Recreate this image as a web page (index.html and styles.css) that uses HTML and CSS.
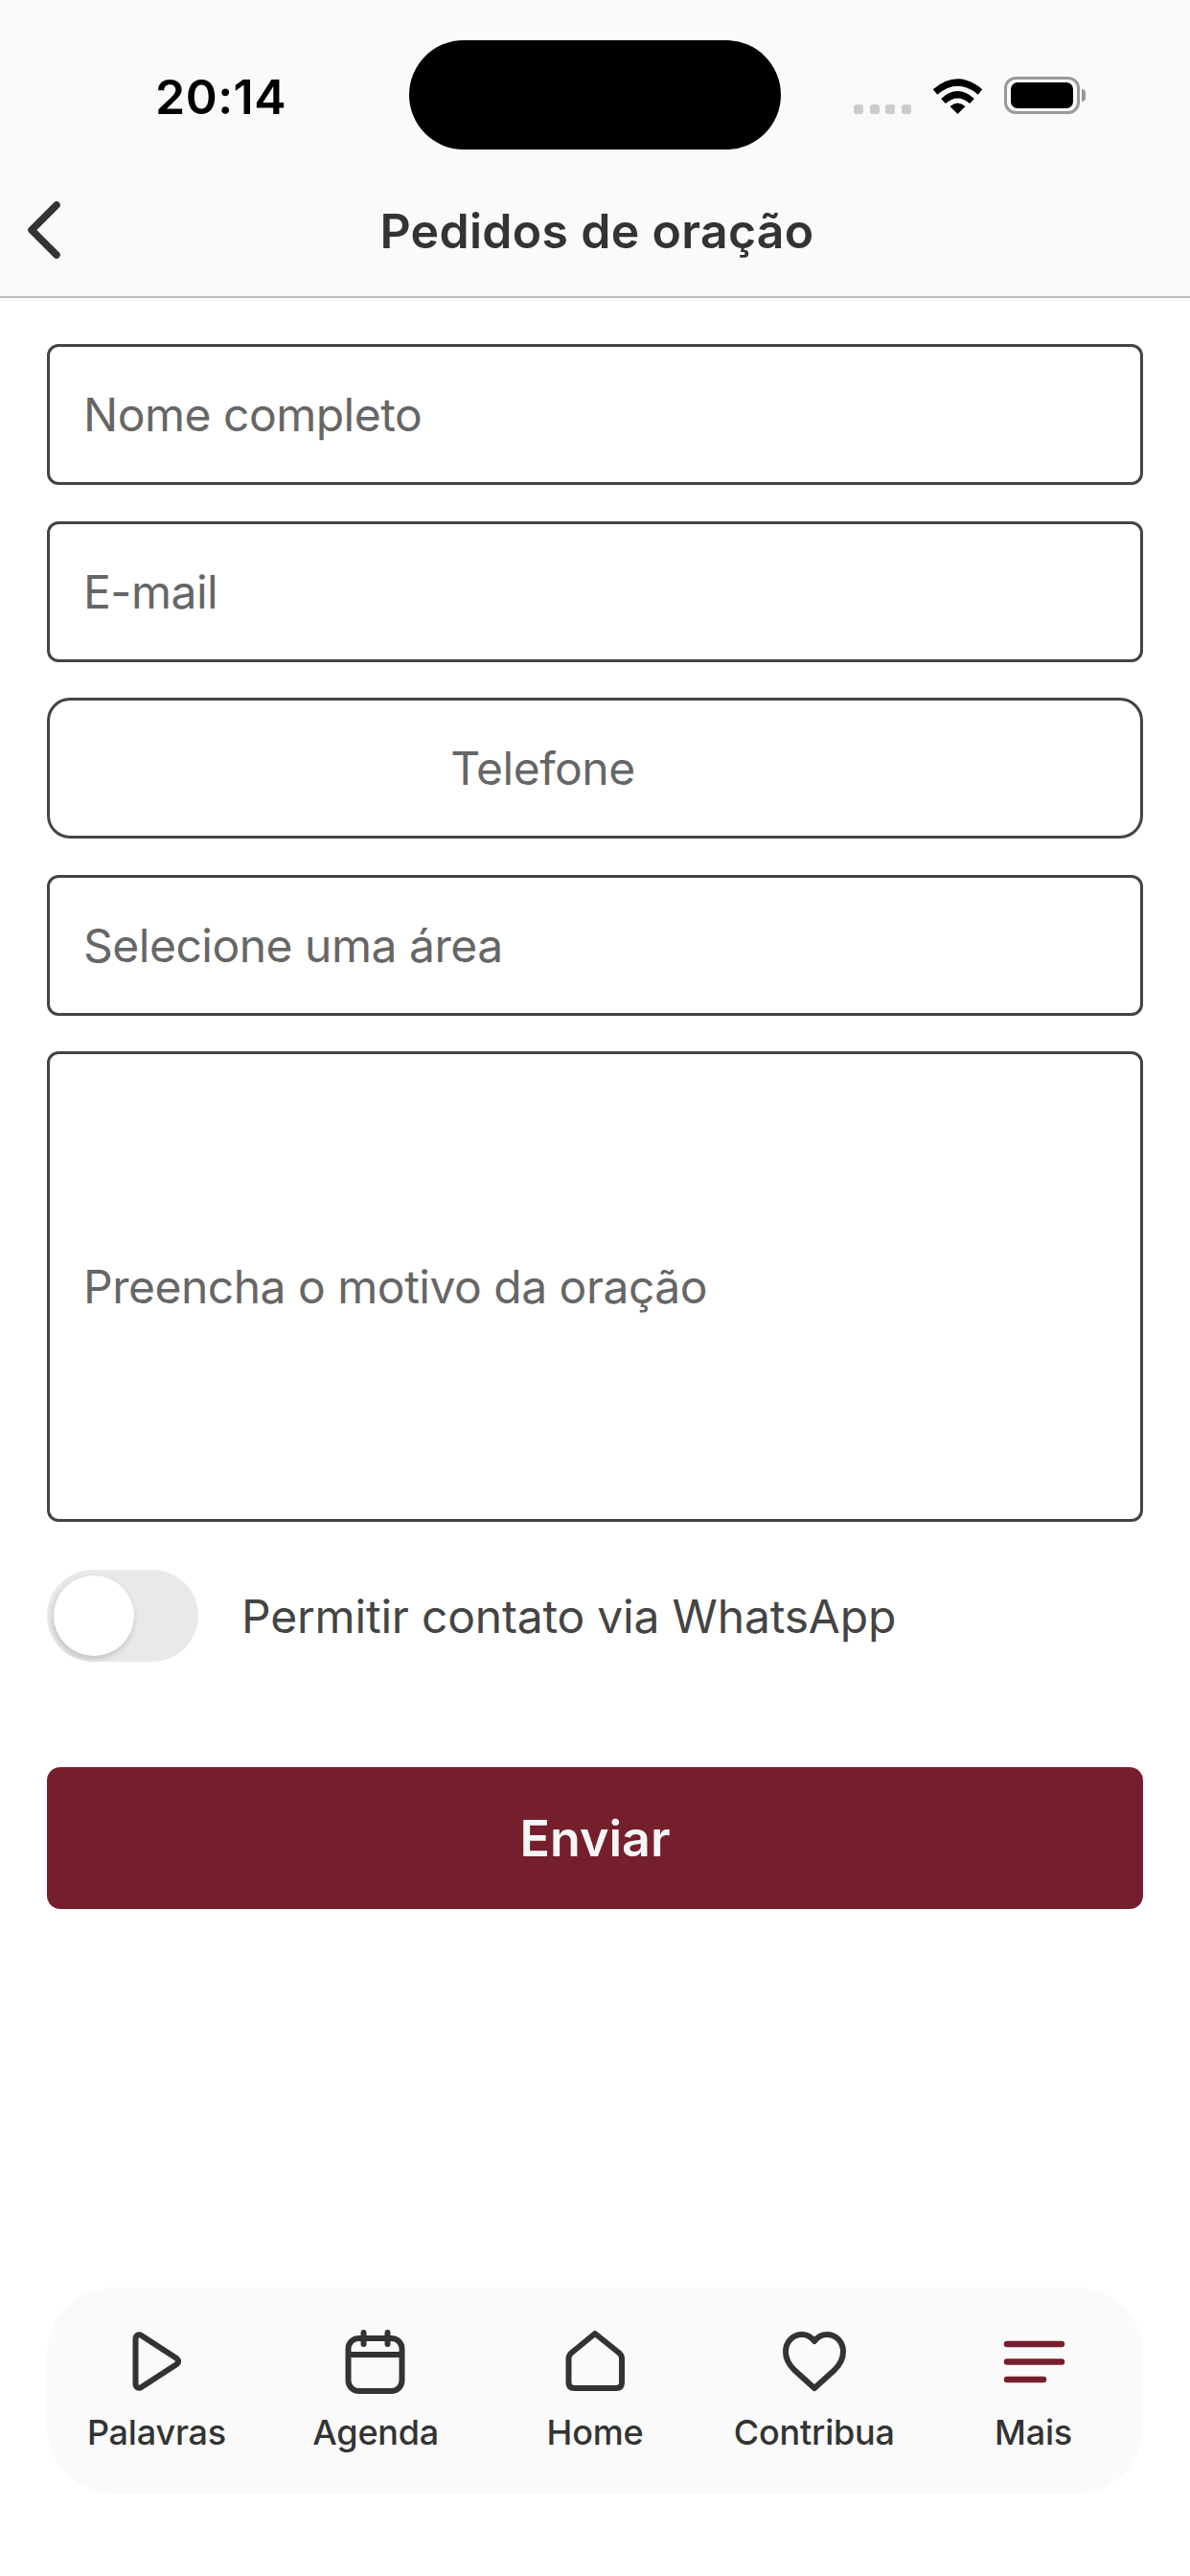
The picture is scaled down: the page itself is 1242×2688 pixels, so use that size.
FILE: index.html
```html
<!DOCTYPE html>
<html lang="pt-BR">
<head>
    <meta charset="UTF-8">
    <meta name="viewport" content="width=device-width, initial-scale=1.0">
    <title>Pedidos de oração</title>
    <link rel="stylesheet" href="styles.css">
</head>
<body>
    <div class="page">
        <header class="top">
            <div class="status-bar">
                <div class="status-time">20:14</div>
                <div class="island"></div>
                <div class="status-icons">
                    <div class="signal"><span></span><span></span><span></span><span></span></div>
                    <svg class="wifi" width="53" height="38" viewBox="0 0 53 38">
                        <path d="M3 15 Q26.5 -5 50 15" fill="none" stroke="#000" stroke-width="7"/>
                        <path d="M11.5 24.5 Q26.5 11 41.5 24.5" fill="none" stroke="#000" stroke-width="7"/>
                        <path d="M18.5 30 Q26.5 23 34.5 30 L26.5 38 Z" fill="#000"/>
                    </svg>
                    <div class="battery"><div class="battery-level"></div></div>
                    <div class="battery-cap"></div>
                </div>
            </div>
            <nav class="nav-bar">
                <svg class="back" width="36" height="60" viewBox="0 0 36 60">
                    <path d="M31 4 L5 30 L31 56" fill="none" stroke="#333" stroke-width="7.5" stroke-linecap="round" stroke-linejoin="round"/>
                </svg>
                <h1 class="nav-title">Pedidos de oração</h1>
            </nav>
        </header>

        <main class="form">
            <div class="field">Nome completo</div>
            <div class="field">E-mail</div>
            <div class="field field-phone">Telefone</div>
            <div class="field">Selecione uma área</div>
            <div class="field field-message">Preencha o motivo da oração</div>

            <div class="whatsapp">
                <div class="toggle"><div class="toggle-knob"></div></div>
                <span class="whatsapp-label">Permitir contato via WhatsApp</span>
            </div>

            <button class="send">Enviar</button>
        </main>

        <footer class="tabbar">
            <div class="tab">
                <svg class="tab-icon" viewBox="0 0 70 70">
                    <path d="M13.5 11 C13.5 7 16.5 5 19.5 7 L56.5 31 Q59.5 34 56.5 37 L19.5 61 C16.5 63 13.5 61 13.5 57 Z"/>
                </svg>
                <span class="tab-label">Palavras</span>
            </div>
            <div class="tab">
                <svg class="tab-icon" viewBox="0 0 70 70">
                    <rect x="6.5" y="10" width="56" height="55" rx="11"/>
                    <path d="M6.5 27 H62.5"/>
                    <path d="M22.5 4 V16 M47.5 4 V16" stroke-linecap="round"/>
                </svg>
                <span class="tab-label">Agenda</span>
            </div>
            <div class="tab">
                <svg class="tab-icon" viewBox="0 0 70 70">
                    <path d="M35 5 L60.5 25.5 Q63 28 63 31 V56 Q63 62 57 62 H13.5 Q7.5 62 7.5 56 V31 Q7.5 28 10 25.5 Z"/>
                </svg>
                <span class="tab-label">Home</span>
            </div>
            <div class="tab">
                <svg class="tab-icon" viewBox="0 0 70 70">
                    <path d="M35 62 L14 43 C8 37 5 31 5 24 C5 13 13 6 22 6 C27 6 32 9 35 13 C38 9 43 6 48 6 C57 6 65 13 65 24 C65 31 62 37 56 43 Z"/>
                </svg>
                <span class="tab-label">Contribua</span>
            </div>
            <div class="tab">
                <svg class="tab-icon tab-icon-active" viewBox="0 0 70 70">
                    <path d="M7 16 H64 M7 34.5 H64 M7 53 H45" stroke-linecap="round"/>
                </svg>
                <span class="tab-label">Mais</span>
            </div>
        </footer>
    </div>
</body>
</html>
```

FILE: styles.css
```css
:root {
    --wine: #751f2d;
    --text-dark: #333;
    --text-mid: #444;
    --text-light: #666;
    --soft-gray: #fafafa;
}

body {
    font-family: Inter, "Open Sans", Arial, sans-serif;
    background-color: #fff;
    color: var(--text-dark);
    margin: 0;
    padding: 0;
}

.page {
    display: flex;
    flex-direction: column;
    min-height: 2688px;
}

.top {
    background-color: var(--soft-gray);
    border-bottom: 2px solid #bbb;
}

.status-bar {
    display: flex;
    align-items: flex-start;
    height: 114px;
    padding-top: 42px;
}

.status-time {
    width: 265px;
    padding: 29px 0 0 162px;
    font-size: 50px;
    font-weight: 600;
    line-height: 60px;
    letter-spacing: 0.5px;
    color: #000;
}

.island {
    width: 388px;
    height: 114px;
    background-color: #000;
    border-radius: 57px;
}

.status-icons {
    display: flex;
    align-items: flex-start;
    padding: 38px 0 0 76px;
}

.signal {
    display: flex;
    gap: 6.5px;
    margin-top: 29px;
}

.signal span {
    width: 10px;
    height: 10px;
    background-color: #ccc;
    border-radius: 3px;
}

.wifi {
    margin-left: 22px;
    margin-top: 1px;
}

.battery {
    box-sizing: border-box;
    width: 79px;
    height: 39px;
    margin-left: 22px;
    padding: 3px 4px;
    border: 3px solid #999;
    border-radius: 12px;
}

.battery-level {
    height: 100%;
    background-color: #000;
    border-radius: 7px;
}

.battery-cap {
    width: 4px;
    height: 13px;
    margin: 13px 0 0 2px;
    background-color: #999;
    border-radius: 0 6px 6px 0;
}

.nav-bar {
    display: flex;
    align-items: center;
    justify-content: center;
    position: relative;
    height: 137px;
    padding-top: 16px;
}

.back {
    position: absolute;
    left: 28px;
    top: 54px;
}

.nav-title {
    margin: 0;
    padding-left: 4px;
    font-size: 50px;
    font-weight: 600;
    letter-spacing: 0.3px;
    color: var(--text-dark);
}

.form {
    display: flex;
    flex-direction: column;
    padding: 48px 49px 0;
}

.field {
    display: flex;
    align-items: center;
    box-sizing: border-box;
    height: 147px;
    margin-bottom: 37.5px;
    padding: 0 35px;
    border: 3px solid var(--text-mid);
    border-radius: 12px;
    font-size: 48px;
    letter-spacing: -0.5px;
    color: var(--text-light);
}

.field-phone {
    justify-content: center;
    padding-right: 144px;
    border-radius: 24px;
}

.field-message {
    height: 491px;
    margin-bottom: 50px;
}

.whatsapp {
    display: flex;
    align-items: center;
    gap: 45px;
}

.toggle {
    box-sizing: border-box;
    width: 158px;
    height: 96px;
    padding: 6px 7px;
    background-color: #e9e9eb;
    border-radius: 48px;
}

.toggle-knob {
    width: 84px;
    height: 84px;
    background-color: #fff;
    border-radius: 50%;
    box-shadow: -1px 3px 6px rgba(0, 0, 0, 0.18);
}

.whatsapp-label {
    font-size: 48px;
    letter-spacing: -0.2px;
    color: var(--text-mid);
}

.send {
    height: 148px;
    margin-top: 110px;
    background-color: var(--wine);
    color: #f4f5f6;
    border: none;
    border-radius: 14px;
    font-family: inherit;
    font-size: 52px;
    font-weight: 600;
}

.tabbar {
    display: flex;
    height: 215px;
    margin: auto 49px 86px;
    background-color: var(--soft-gray);
    border-radius: 70px;
}

.tab {
    flex: 1;
    display: flex;
    flex-direction: column;
    align-items: center;
    padding-top: 43px;
}

.tab-icon {
    width: 70px;
    height: 70px;
    fill: none;
    stroke: var(--text-dark);
    stroke-width: 6px;
    stroke-linejoin: round;
}

.tab-icon-active {
    stroke: var(--wine);
    stroke-width: 6.5px;
}

.tab-label {
    margin-top: 16px;
    font-size: 36px;
    font-weight: 500;
    line-height: 44px;
    letter-spacing: -0.2px;
    color: var(--text-dark);
}
```
